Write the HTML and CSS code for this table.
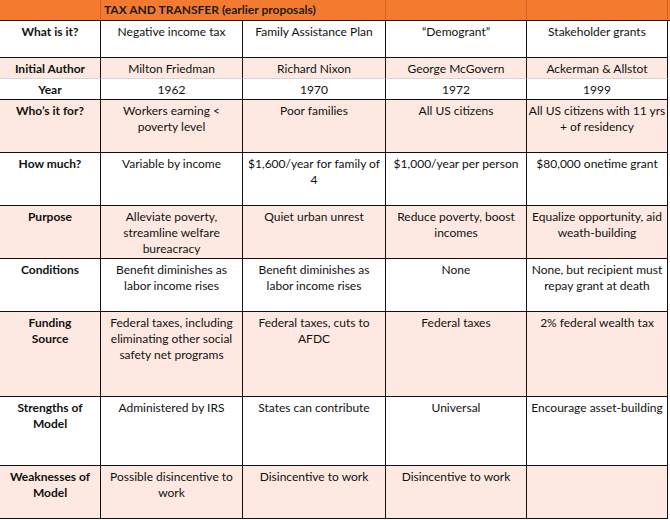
FILE: index.html
```html
<!DOCTYPE html>
<html lang="en">
<head>
<meta charset="utf-8">
<title>Tax and Transfer (earlier proposals)</title>
<link rel="stylesheet" href="styles.css">
</head>
<body>
<div class="sheet">
  <div class="band">
    <div class="bcell"></div>
    <div class="bcell title span2">TAX AND TRANSFER (earlier proposals)</div>
    <div class="bcell"></div>
    <div class="bcell"></div>
    <div class="bcell last"></div>
  </div>

  <div class="row white h37">
    <div class="cell head">What is it?</div>
    <div class="cell">Negative income tax</div>
    <div class="cell">Family Assistance Plan</div>
    <div class="cell">“Demogrant”</div>
    <div class="cell">Stakeholder grants</div>
  </div>

  <div class="row pink h21 light">
    <div class="cell head">Initial Author</div>
    <div class="cell">Milton Friedman</div>
    <div class="cell">Richard Nixon</div>
    <div class="cell">George McGovern</div>
    <div class="cell">Ackerman &amp; Allstot</div>
  </div>

  <div class="row white h21">
    <div class="cell head">Year</div>
    <div class="cell">1962</div>
    <div class="cell">1970</div>
    <div class="cell">1972</div>
    <div class="cell">1999</div>
  </div>

  <div class="row pink h53">
    <div class="cell head">Who’s it for?</div>
    <div class="cell">Workers earning &lt;<br>poverty level</div>
    <div class="cell">Poor families</div>
    <div class="cell">All US citizens</div>
    <div class="cell">All US citizens with 11 yrs<br>+ of residency</div>
  </div>

  <div class="row white h53">
    <div class="cell head">How much?</div>
    <div class="cell">Variable by income</div>
    <div class="cell">$1,600/year for family of<br>4</div>
    <div class="cell">$1,000/year per person</div>
    <div class="cell">$80,000 onetime grant</div>
  </div>

  <div class="row pink h53">
    <div class="cell head">Purpose</div>
    <div class="cell">Alleviate poverty,<br>streamline welfare<br>bureacracy</div>
    <div class="cell">Quiet urban unrest</div>
    <div class="cell">Reduce poverty, boost<br>incomes</div>
    <div class="cell">Equalize opportunity, aid<br>weath-building</div>
  </div>

  <div class="row white h53">
    <div class="cell head">Conditions</div>
    <div class="cell">Benefit diminishes as<br>labor income rises</div>
    <div class="cell">Benefit diminishes as<br>labor income rises</div>
    <div class="cell">None</div>
    <div class="cell">None, but recipient must<br>repay grant at death</div>
  </div>

  <div class="row pink h85">
    <div class="cell head">Funding<br>Source</div>
    <div class="cell">Federal taxes, including<br>eliminating other social<br>safety net programs</div>
    <div class="cell">Federal taxes, cuts to<br>AFDC</div>
    <div class="cell">Federal taxes</div>
    <div class="cell">2% federal wealth tax</div>
  </div>

  <div class="row white h69">
    <div class="cell head">Strengths of<br>Model</div>
    <div class="cell">Administered by IRS</div>
    <div class="cell">States can contribute</div>
    <div class="cell">Universal</div>
    <div class="cell">Encourage asset-building</div>
  </div>

  <div class="row pink h53">
    <div class="cell head">Weaknesses of<br>Model</div>
    <div class="cell">Possible disincentive to<br>work</div>
    <div class="cell">Disincentive to work</div>
    <div class="cell">Disincentive to work</div>
    <div class="cell"></div>
  </div>
</div>
</body>
</html>
```

FILE: styles.css
```css
html, body {
  margin: 0;
  padding: 0;
  background: #ffffff;
}

.sheet {
  width: 670px;
  font-family: "Lato", "Open Sans", sans-serif;
  font-size: 12px;
  line-height: 16px;
  color: #111111;
}

.band {
  display: grid;
  grid-template-columns: 101px 285px 141px 141px 2px;
  height: 21px;
  background: #f47a30;
  border-bottom: 1px solid #1a1a1a;
  box-sizing: border-box;
}

.bcell {
  border-right: 1px solid #cf6426;
  box-sizing: border-box;
}

.bcell.last {
  border-right: none;
}

.bcell.title {
  font-weight: 700;
  color: #1c1c1c;
  padding: 2px 0 0 3px;
  white-space: nowrap;
}

.row {
  display: grid;
  grid-template-columns: 101px 142px 143px 141px 141px;
  width: 668px;
}

.row.white { background: #ffffff; }
.row.pink { background: #fde9e1; }

.h21 { height: 21px; }
.h37 { height: 37px; }
.h53 { height: 53px; }
.h69 { height: 69px; }
.h85 { height: 85px; }

.cell {
  box-sizing: border-box;
  border-right: 1px solid #111111;
  border-bottom: 1px solid #111111;
  padding: 3px 1px 0;
  text-align: center;
  white-space: nowrap;
}

.row.light .cell {
  border-bottom-color: #d6d6d6;
}

.cell.head {
  font-weight: 700;
}
```
